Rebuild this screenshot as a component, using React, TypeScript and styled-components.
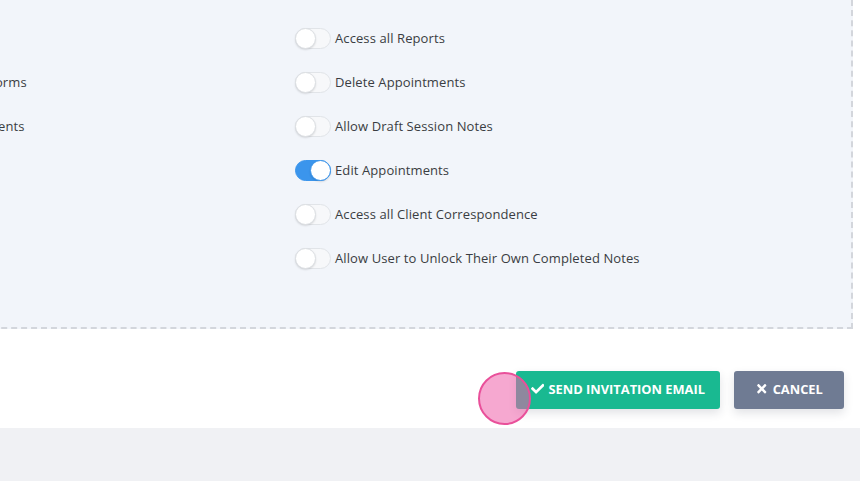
import React from "react";
import styled, { createGlobalStyle } from "styled-components";
import { FaCheck, FaTimes } from "react-icons/fa";

const GlobalStyle = createGlobalStyle`
  html, body { margin: 0; padding: 0; }
  body {
    font-family: "Open Sans", "Noto Sans", sans-serif;
    background: #ffffff;
    overflow: hidden;
    width: 860px;
    height: 481px;
  }
`;

const Page = styled.div`
  display: flex;
  flex-direction: column;
  width: 860px;
  height: 481px;
  overflow: hidden;
`;

const Panel = styled.section`
  margin-left: -158px;
  margin-right: 7px;
  padding: 16px 20px 47px 20px;
  background: #f2f5fa;
  border-right: 2px dashed #d3d6dc;
  border-bottom: 2px dashed #d3d6dc;
`;

const Grid = styled.div`
  display: grid;
  grid-template-columns: 433px 1fr;
  grid-auto-rows: 44px;
`;

const Item = styled.label`
  display: flex;
  align-items: center;
  gap: 4px;
  font-size: 13px;
  letter-spacing: 0.1px;
  color: #3a3d42;
  white-space: nowrap;
`;

const Track = styled.span<{ $on: boolean }>`
  position: relative;
  flex: none;
  width: 36px;
  height: 21px;
  border-radius: 11px;
  box-sizing: border-box;
  background: ${(p) => (p.$on ? "#3b95ec" : "#f7f8fa")};
  border: 1px solid ${(p) => (p.$on ? "#3b95ec" : "#e1e4e8")};
`;

const Knob = styled.span<{ $on: boolean }>`
  position: absolute;
  top: -1px;
  left: ${(p) => (p.$on ? "14px" : "-1px")};
  width: 21px;
  height: 21px;
  border-radius: 50%;
  background: #ffffff;
  box-sizing: border-box;
  border: 1px solid ${(p) => (p.$on ? "#3b95ec" : "#dcdfe3")};
  box-shadow: 0 1px 2px rgba(0, 0, 0, 0.12);
`;

const Footer = styled.div`
  height: 99px;
  display: flex;
  justify-content: flex-end;
  align-items: flex-start;
  gap: 14px;
  padding: 42px 16px 0 0;
  box-sizing: border-box;
  background: #ffffff;
`;

const Bottom = styled.div`
  flex: 1;
  background: #f0f1f4;
`;

const Button = styled.button<{ $variant: "primary" | "muted" }>`
  position: relative;
  height: 38px;
  min-width: 110px;
  padding: 0 15px 3px;
  display: inline-flex;
  align-items: center;
  justify-content: center;
  gap: 4px;
  border: none;
  border-radius: 3px;
  font-family: "Open Sans", "Noto Sans", sans-serif;
  font-weight: 700;
  font-size: 12.85px;
  text-transform: uppercase;
  color: #ffffff;
  background: ${(p) => (p.$variant === "primary" ? "#19b991" : "#6f7b93")};
  box-shadow: 0 4px 10px rgba(40, 50, 70, 0.14);
  cursor: pointer;
  svg { font-size: 13.5px; }
`;

const ClickMark = styled.span`
  position: absolute;
  left: -38px;
  top: 1px;
  width: 53px;
  height: 53px;
  box-sizing: border-box;
  border-radius: 50%;
  background: rgba(238, 96, 170, 0.55);
  border: 2px solid #e9509a;
  pointer-events: none;
`;

type Perm = { label: string; on?: boolean };

const left: Perm[] = [
  { label: "" },
  { label: "Access Intake Forms" },
  { label: "Access Attachments" },
  { label: "" },
  { label: "" },
  { label: "" },
];

const right: Perm[] = [
  { label: "Access all Reports" },
  { label: "Delete Appointments" },
  { label: "Allow Draft Session Notes" },
  { label: "Edit Appointments", on: true },
  { label: "Access all Client Correspondence" },
  { label: "Allow User to Unlock Their Own Completed Notes" },
];

function Toggle({ on }: { on: boolean }) {
  return (
    <Track $on={on}>
      <Knob $on={on} />
    </Track>
  );
}

export default function App() {
  const rows = right.map((r, i) => [left[i], r] as const);
  return (
    <Page>
      <GlobalStyle />
      <Panel>
        <Grid>
          {rows.map(([l, r], i) => (
            <React.Fragment key={i}>
              <Item>
                {l.label && (
                  <>
                    <Toggle on={!!l.on} />
                    {l.label}
                  </>
                )}
              </Item>
              <Item>
                <Toggle on={!!r.on} />
                {r.label}
              </Item>
            </React.Fragment>
          ))}
        </Grid>
      </Panel>
      <Footer>
        <Button $variant="primary">
          <FaCheck />
          Send Invitation Email
          <ClickMark />
        </Button>
        <Button $variant="muted">
          <FaTimes />
          Cancel
        </Button>
      </Footer>
      <Bottom />
    </Page>
  );
}
